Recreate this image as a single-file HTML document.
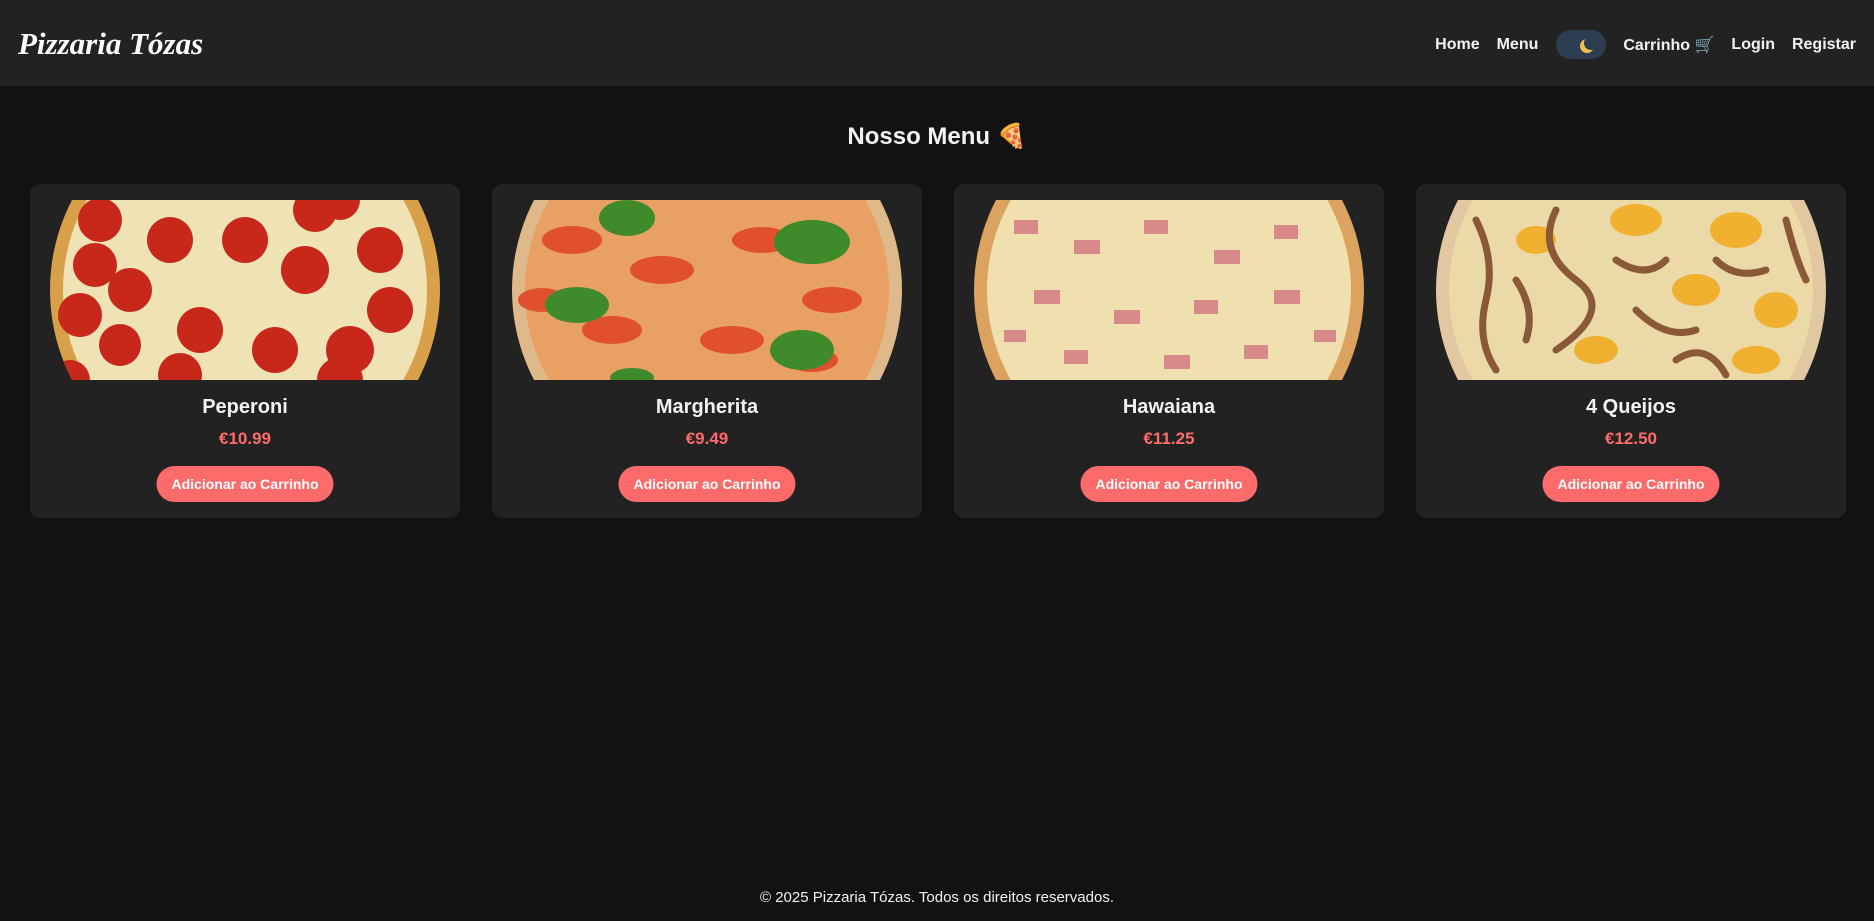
<!DOCTYPE html>
<html><head><meta charset="utf-8"><style>
*{box-sizing:border-box;margin:0;padding:0}
body{width:1874px;height:921px;background:#121212;font-family:"Liberation Sans",sans-serif;color:#f2f2f2;position:relative;overflow:hidden}
header{height:86px;background:#222;position:relative}
.logo{position:absolute;left:18px;top:26px;font-family:"Liberation Serif",serif;font-style:italic;font-weight:bold;font-size:31px;color:#fff;letter-spacing:0px}
nav{position:absolute;right:18px;top:30px;display:flex;align-items:center;font-weight:bold;font-size:16px}
nav span{margin-left:17px}
.tog{width:50px;height:29px;border-radius:15px;background:#2c3e50;margin-left:18px;position:relative}
.tog::after{content:"";position:absolute;right:8px;top:6px;width:14px;height:14px;border-radius:50%;box-shadow:-4px 3px 0 0 #f2c04a}
h2{position:absolute;top:122px;left:0;width:100%;text-align:center;font-size:24px;font-weight:bold}
.card{position:absolute;top:184px;width:430px;height:334px;background:#222;border-radius:10px;text-align:center}
.card svg{position:absolute;left:20px;top:16px}
.t{position:absolute;top:212px;width:100%;font-size:20px;font-weight:bold}
.p{position:absolute;top:245px;width:100%;font-size:17px;font-weight:bold;color:#ff6b6b}
.b{position:absolute;top:282px;left:50%;transform:translateX(-50%);background:#ff6b6b;color:#fff;font-size:14px;font-weight:bold;padding:10px 15px;border-radius:18px;white-space:nowrap}
footer{position:absolute;top:889px;width:100%;text-align:center;font-size:15px}
</style></head><body>
<header><div class="logo">Pizzaria Tózas</div>
<nav><span>Home</span><span>Menu</span><div class="tog"></div><span>Carrinho 🛒</span><span>Login</span><span>Registar</span></nav></header>
<h2>Nosso Menu 🍕</h2>

<div class="card" style="left:30px"><svg width="390" height="180"><defs><clipPath id="c1"><circle cx="195" cy="90" r="195"/></clipPath></defs><g clip-path="url(#c1)"><rect width="390" height="180" fill="#d9a04a"/><circle cx="195" cy="90" r="182" fill="#efe2b5"/>
<g fill="#c8281a"><circle cx="50" cy="20" r="22"/><circle cx="120" cy="40" r="23"/><circle cx="195" cy="40" r="23"/><circle cx="265" cy="10" r="22"/><circle cx="255" cy="70" r="24"/><circle cx="330" cy="50" r="23"/><circle cx="45" cy="65" r="22"/><circle cx="80" cy="90" r="22"/><circle cx="30" cy="115" r="22"/><circle cx="150" cy="130" r="23"/><circle cx="225" cy="150" r="23"/><circle cx="130" cy="175" r="22"/><circle cx="290" cy="180" r="23"/><circle cx="300" cy="150" r="24"/><circle cx="340" cy="110" r="23"/><circle cx="70" cy="145" r="21"/><circle cx="20" cy="180" r="20"/><circle cx="290" cy="0" r="20"/></g></g></svg>
<div class="t">Peperoni</div><div class="p">€10.99</div><div class="b">Adicionar ao Carrinho</div></div>

<div class="card" style="left:492px"><svg width="390" height="180"><defs><clipPath id="c2"><circle cx="195" cy="90" r="195"/></clipPath></defs><g clip-path="url(#c2)"><rect width="390" height="180" fill="#e0b98a"/><circle cx="195" cy="90" r="182" fill="#e8a064"/>
<g fill="#e0502e"><ellipse cx="60" cy="40" rx="30" ry="14"/><ellipse cx="150" cy="70" rx="32" ry="14"/><ellipse cx="250" cy="40" rx="30" ry="13"/><ellipse cx="320" cy="100" rx="30" ry="13"/><ellipse cx="100" cy="130" rx="30" ry="14"/><ellipse cx="220" cy="140" rx="32" ry="14"/><ellipse cx="300" cy="160" rx="26" ry="12"/><ellipse cx="30" cy="100" rx="24" ry="12"/></g>
<g fill="#3f8a2a"><ellipse cx="115" cy="18" rx="28" ry="18"/><ellipse cx="300" cy="42" rx="38" ry="22"/><ellipse cx="65" cy="105" rx="32" ry="18"/><ellipse cx="290" cy="150" rx="32" ry="20"/><ellipse cx="120" cy="178" rx="22" ry="10"/></g></g></svg>
<div class="t">Margherita</div><div class="p">€9.49</div><div class="b">Adicionar ao Carrinho</div></div>

<div class="card" style="left:954px"><svg width="390" height="180"><defs><clipPath id="c3"><circle cx="195" cy="90" r="195"/></clipPath></defs><g clip-path="url(#c3)"><rect width="390" height="180" fill="#dca260"/><circle cx="195" cy="90" r="182" fill="#f0e0b0"/>
<g fill="#d88a8a"><rect x="40" y="20" width="24" height="14"/><rect x="100" y="40" width="26" height="14"/><rect x="170" y="20" width="24" height="14"/><rect x="240" y="50" width="26" height="14"/><rect x="300" y="25" width="24" height="14"/><rect x="60" y="90" width="26" height="14"/><rect x="140" y="110" width="26" height="14"/><rect x="220" y="100" width="24" height="14"/><rect x="300" y="90" width="26" height="14"/><rect x="90" y="150" width="24" height="14"/><rect x="190" y="155" width="26" height="14"/><rect x="270" y="145" width="24" height="14"/><rect x="30" y="130" width="22" height="12"/><rect x="340" y="130" width="22" height="12"/></g></g></svg>
<div class="t">Hawaiana</div><div class="p">€11.25</div><div class="b">Adicionar ao Carrinho</div></div>

<div class="card" style="left:1416px"><svg width="390" height="180"><defs><clipPath id="c4"><circle cx="195" cy="90" r="195"/></clipPath></defs><g clip-path="url(#c4)"><rect width="390" height="180" fill="#e2c8a0"/><circle cx="195" cy="90" r="182" fill="#ecd9a8"/>
<g fill="#f0b030"><ellipse cx="200" cy="20" rx="26" ry="16"/><ellipse cx="300" cy="30" rx="26" ry="18"/><ellipse cx="260" cy="90" rx="24" ry="16"/><ellipse cx="340" cy="110" rx="22" ry="18"/><ellipse cx="100" cy="40" rx="20" ry="14"/><ellipse cx="160" cy="150" rx="22" ry="14"/><ellipse cx="320" cy="160" rx="24" ry="14"/></g>
<g stroke="#8a5a38" stroke-width="7" fill="none" stroke-linecap="round"><path d="M40 20 Q60 60 50 100 T60 170"/><path d="M120 10 Q100 50 140 80 T120 150"/><path d="M180 60 Q210 80 230 60"/><path d="M200 110 Q230 140 260 130"/><path d="M280 60 Q300 80 330 70"/><path d="M240 160 Q270 140 290 175"/><path d="M80 80 Q100 110 90 140"/><path d="M350 20 Q360 60 370 80"/></g></g></svg>
<div class="t">4 Queijos</div><div class="p">€12.50</div><div class="b">Adicionar ao Carrinho</div></div>

<footer>© 2025 Pizzaria Tózas. Todos os direitos reservados.</footer>
</body></html>
